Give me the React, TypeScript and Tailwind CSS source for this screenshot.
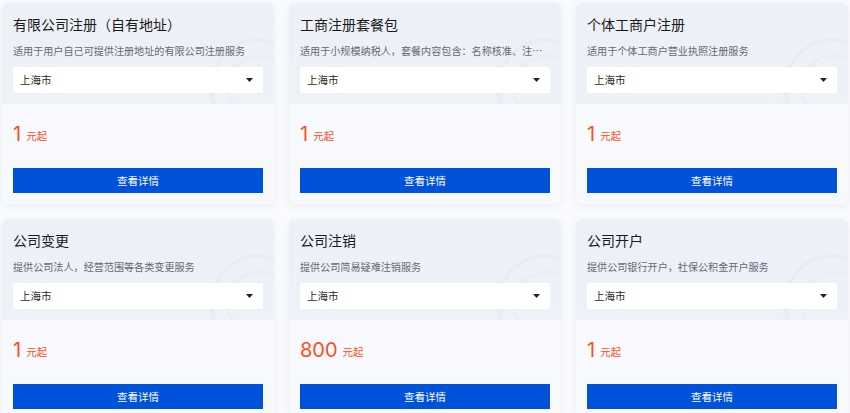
import React from "react";

type Item = { title: string; desc: string; price: string };

const items: Item[] = [
  { title: "有限公司注册（自有地址）", desc: "适用于用户自己可提供注册地址的有限公司注册服务", price: "1" },
  { title: "工商注册套餐包", desc: "适用于小规模纳税人，套餐内容包含：名称核准、注册登记、刻章、银行开户", price: "1" },
  { title: "个体工商户注册", desc: "适用于个体工商户营业执照注册服务", price: "1" },
  { title: "公司变更", desc: "提供公司法人，经营范围等各类变更服务", price: "1" },
  { title: "公司注销", desc: "提供公司简易疑难注销服务", price: "800" },
  { title: "公司开户", desc: "提供公司银行开户，社保公积金开户服务", price: "1" },
];

function Card({ item }: { item: Item }) {
  return (
    <div className="relative h-[201px] rounded-md overflow-hidden bg-[#f8f9fc] shadow-[0_2px_8px_rgba(30,50,120,0.07)]">
      <div className="relative h-[101px] bg-gradient-to-b from-[#edf0f7] to-[#eef1f8] px-[11px] pt-[9px] overflow-hidden">
        <svg className="absolute right-[-45px] top-[25px]" width="120" height="120" viewBox="0 0 120 120">
          <circle cx="60" cy="60" r="48" fill="none" stroke="#e9ecf4" strokeWidth="4" />
          <circle cx="60" cy="60" r="32" fill="none" stroke="#eaedf5" strokeWidth="3" />
        </svg>
        <div className="relative h-[24px] leading-[24px] text-[14px] text-[#1a1a1a] truncate">{item.title}</div>
        <div className="relative mt-[6px] h-[18px] leading-[18px] text-[10.1px] text-[#666a73] truncate pr-[6px]">{item.desc}</div>
        <div className="relative mt-[7px] h-[26px] bg-white rounded-[2px] flex items-center justify-between pl-[7px] pr-[10px]">
          <span className="text-[10.5px] text-[#2a2a2a]">上海市</span>
          <svg width="7" height="4" viewBox="0 0 7 4">
            <path d="M0 0 L7 0 L3.5 4 Z" fill="#222" />
          </svg>
        </div>
      </div>
      <div className="px-[11px] pt-[16px]">
        <div className="h-[28px] flex items-center text-[#ff4d1c]">
          <span className="text-[20px] leading-none" style={{ fontFamily: "Inter, 'Noto Sans', sans-serif" }}>{item.price}</span>
          <span className="ml-[5px] mt-[5px] text-[10.5px] leading-none">元起</span>
        </div>
        <button className="mt-[20px] w-full h-[25px] bg-[#0052d9] text-white text-[10.5px] flex items-center justify-center">
          查看详情
        </button>
      </div>
    </div>
  );
}

export default function App() {
  return (
    <div
      className="w-[850px] h-[413px] overflow-hidden bg-[#fafbfd] pl-[2px] pt-[3px]"
      style={{ fontFamily: "'Noto Sans CJK SC', 'Noto Sans', sans-serif" }}
    >
      <div className="grid grid-cols-[272px_272px_272px] gap-x-[15px] gap-y-[15px]">
        {items.map((it, i) => (
          <Card key={i} item={it} />
        ))}
      </div>
    </div>
  );
}
